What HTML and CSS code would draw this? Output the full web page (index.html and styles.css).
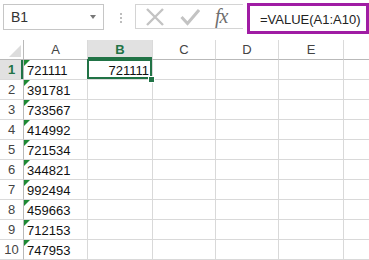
FILE: index.html
```html
<!DOCTYPE html>
<html lang="en">
<head>
    <meta charset="UTF-8">
    <title>VALUE</title>
    <link rel="stylesheet" href="styles.css">
</head>
<body>
<div class="toolbar">
    <div class="name-box">
        <span>B1</span>
        <span class="arrow"></span>
    </div>
    <div class="dots"><i></i><i></i><i></i></div>
    <div class="icons">
        <svg class="ico-x" width="20" height="18" viewBox="0 0 20 18">
            <path d="M2 1 L18 17 M18 1 L2 17" stroke="#c3c3c3" stroke-width="2.4" fill="none"/>
        </svg>
        <svg class="ico-ok" width="20" height="18" viewBox="0 0 20 18">
            <path d="M1.5 9 L7.5 15.5 L19 2" stroke="#c3c3c3" stroke-width="3" fill="none"/>
        </svg>
        <span class="fx">fx</span>
    </div>
    <div class="formula">=VALUE(A1:A10)</div>
</div>

<div class="sheet">
    <div class="hd corner">
        <svg width="24" height="20" viewBox="0 0 24 20">
            <path d="M9 17 L21 17 L21 5 Z" fill="#dcdcdc"/>
        </svg>
    </div>
    <div class="hd">A</div>
    <div class="hd hd-sel">B</div>
    <div class="hd">C</div>
    <div class="hd">D</div>
    <div class="hd">E</div>
    <div class="hd last"></div>

    <div class="rh rh-sel">1</div>
    <div class="c txt">721111</div>
    <div class="c num sel">721111</div>
    <div class="c"></div><div class="c"></div><div class="c"></div><div class="c last"></div>

    <div class="rh">2</div>
    <div class="c txt">391781</div>
    <div class="c"></div><div class="c"></div><div class="c"></div><div class="c"></div><div class="c last"></div>

    <div class="rh">3</div>
    <div class="c txt">733567</div>
    <div class="c"></div><div class="c"></div><div class="c"></div><div class="c"></div><div class="c last"></div>

    <div class="rh">4</div>
    <div class="c txt">414992</div>
    <div class="c"></div><div class="c"></div><div class="c"></div><div class="c"></div><div class="c last"></div>

    <div class="rh">5</div>
    <div class="c txt">721534</div>
    <div class="c"></div><div class="c"></div><div class="c"></div><div class="c"></div><div class="c last"></div>

    <div class="rh">6</div>
    <div class="c txt">344821</div>
    <div class="c"></div><div class="c"></div><div class="c"></div><div class="c"></div><div class="c last"></div>

    <div class="rh">7</div>
    <div class="c txt">992494</div>
    <div class="c"></div><div class="c"></div><div class="c"></div><div class="c"></div><div class="c last"></div>

    <div class="rh">8</div>
    <div class="c txt">459663</div>
    <div class="c"></div><div class="c"></div><div class="c"></div><div class="c"></div><div class="c last"></div>

    <div class="rh">9</div>
    <div class="c txt">712153</div>
    <div class="c"></div><div class="c"></div><div class="c"></div><div class="c"></div><div class="c last"></div>

    <div class="rh">10</div>
    <div class="c txt">747953</div>
    <div class="c"></div><div class="c"></div><div class="c"></div><div class="c"></div><div class="c last"></div>
</div>
</body>
</html>
```

FILE: styles.css
```css
* {
    box-sizing: border-box;
    font-family: 'Liberation Sans', Arial, sans-serif;
}

body {
    margin: 0;
    background: #fff;
    overflow: hidden;
}

.toolbar {
    display: flex;
    align-items: flex-start;
    height: 40px;
    padding: 4px 0 0 3px;
}

.name-box {
    display: flex;
    align-items: center;
    width: 101px;
    height: 26px;
    padding: 0 7px;
    border: 1px solid #c6c6c6;
    font-size: 14px;
    color: #333;
}

.arrow {
    margin-left: auto;
    border-left: 3px solid transparent;
    border-right: 3px solid transparent;
    border-top: 4px solid #777;
}

.dots {
    display: flex;
    flex-direction: column;
    gap: 2px;
    margin: 9px 0 0 16px;
}

.dots i {
    width: 2px;
    height: 2px;
    background: #bdbdbd;
}

.icons {
    display: flex;
    align-items: center;
    width: 108px;
    height: 25px;
    margin-left: 13px;
    border: 1px solid #d4d4d4;
    border-right: none;
}

.ico-x {
    margin-left: 9px;
}

.ico-ok {
    margin-left: 15px;
}

.fx {
    margin-left: 15px;
    font-family: 'Liberation Serif', serif;
    font-style: italic;
    font-size: 20px;
    color: #6f6f6f;
    letter-spacing: -1px;
}

.formula {
    width: 122px;
    height: 31px;
    margin: -1px 0 0 4px;
    padding: 6px 0 0 10px;
    border: 3px solid #a01ca4;
    font-size: 13px;
    color: #222;
}

.sheet {
    display: grid;
    grid-template-columns: 24px 64px 65px 63px 63px 65px 1fr;
    grid-auto-rows: 20px;
}

.hd, .rh, .c {
    font-size: 13px;
    line-height: 20px;
}

.hd {
    text-align: center;
    color: #444;
    border-right: 1px solid #dadada;
    border-bottom: 1px solid #b9b9b9;
}

.corner {
    border-right: 1px solid #b9b9b9;
}

.corner svg {
    display: block;
}

.hd-sel {
    background: #e1e1e1;
    color: #217346;
    font-weight: bold;
    box-shadow: inset 0 -2px 0 #217346;
}

.rh {
    text-align: center;
    color: #444;
    border-right: 1px solid #b9b9b9;
    border-bottom: 1px solid #dadada;
}

.rh-sel {
    background: #e1e1e1;
    color: #217346;
    font-weight: bold;
    box-shadow: inset -2px 0 0 #217346;
}

.c {
    position: relative;
    padding: 1px 3px 0;
    color: #111;
    border-right: 1px solid #d9d9d9;
    border-bottom: 1px solid #d9d9d9;
}

.last {
    border-right: none;
}

.txt::before {
    content: '';
    position: absolute;
    top: 0;
    left: 0;
    border-top: 6px solid #1e8a34;
    border-right: 6px solid transparent;
}

.num {
    text-align: right;
}

.sel::after {
    content: '';
    position: absolute;
    top: -1px;
    left: -1px;
    right: 0;
    bottom: 0;
    border: 2px solid #217346;
}

.sel::before {
    content: '';
    position: absolute;
    right: -2px;
    bottom: -3px;
    width: 5px;
    height: 5px;
    background: #217346;
    outline: 1px solid #fff;
    z-index: 1;
}
```
